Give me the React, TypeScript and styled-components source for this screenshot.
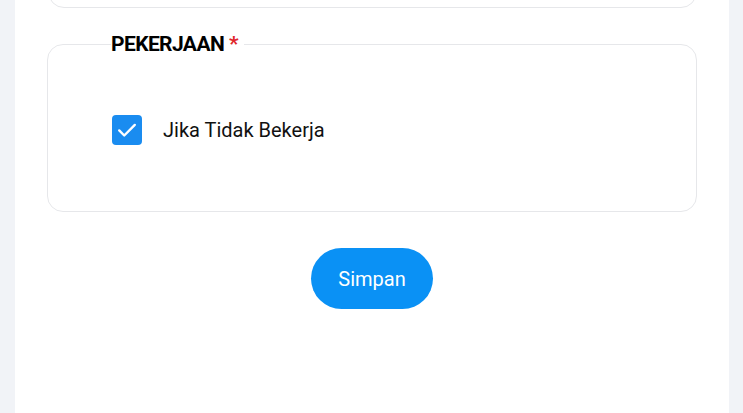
import React from 'react'
import styled, { createGlobalStyle } from 'styled-components'

const GlobalStyle = createGlobalStyle`
    html, body {
        margin: 0;
        padding: 0;
        background: #f1f3f7;
        font-family: Roboto, "Liberation Sans", Arial, sans-serif;
    }
`

const PAGE = styled.div`
    height: 413px;
    overflow: hidden;
    padding: 0 14px 0 15px;
`

const PANEL = styled.div`
    background: #ffffff;
    height: 100%;
    padding: 0 32px;
    display: flex;
    flex-direction: column;
    overflow: hidden;
`

const PREV_CARD = styled.div`
    height: 40px;
    margin-top: -34px;
    border: 1.5px solid #e6e7ea;
    border-radius: 16px;
    margin-left: 1px;
`

const FIELDSET = styled.fieldset`
    margin: 25px 0 0 0;
    padding: 60px 64px 66px 64px;
    border: 1.5px solid #e6e7ea;
    border-radius: 16px;
    min-width: 0;
`

const LEGEND = styled.legend`
    padding: 0 6px 0 0;
    margin-left: -1px;
    font-size: 21px;
    font-weight: 700;
    color: #000000;
    letter-spacing: -0.6px;
    line-height: 22px;
`

const REQUIRED = styled.span`
    color: #e0262b;
    margin-left: 5px;
    font-weight: 700;
`

const CHECK_ROW = styled.label`
    display: flex;
    align-items: center;
    gap: 21px;
`

const CHECKBOX = styled.span<{ checked: boolean }>`
    width: 30px;
    height: 30px;
    border-radius: 4px;
    background: ${p => (p.checked ? '#1a8cf0' : '#ffffff')};
    display: flex;
    align-items: center;
    justify-content: center;
`

const CHECK_LABEL = styled.span`
    font-size: 20px;
    color: #111111;
`

const ACTIONS = styled.div`
    display: flex;
    justify-content: center;
    margin-top: 36px;
`

const BUTTON = styled.button`
    width: 122px;
    height: 61px;
    border: none;
    border-radius: 31px;
    background: #0a91f5;
    color: #ffffff;
    font-family: Roboto, "Liberation Sans", Arial, sans-serif;
    font-size: 20px;
    cursor: pointer;
`

export default function App() {
    return (
        <PAGE>
            <GlobalStyle />
            <PANEL>
                <PREV_CARD />
                <FIELDSET>
                    <LEGEND>
                        PEKERJAAN<REQUIRED>*</REQUIRED>
                    </LEGEND>
                    <CHECK_ROW>
                        <CHECKBOX checked>
                            <svg width="22" height="22" viewBox="0 0 24 24" fill="none" stroke="#fff" strokeWidth="2.6" strokeLinecap="round" strokeLinejoin="round">
                                <path d="M3.5 12.5l5.5 5.5L20.5 6.5" />
                            </svg>
                        </CHECKBOX>
                        <CHECK_LABEL>Jika Tidak Bekerja</CHECK_LABEL>
                    </CHECK_ROW>
                </FIELDSET>
                <ACTIONS>
                    <BUTTON>Simpan</BUTTON>
                </ACTIONS>
            </PANEL>
        </PAGE>
    )
}
